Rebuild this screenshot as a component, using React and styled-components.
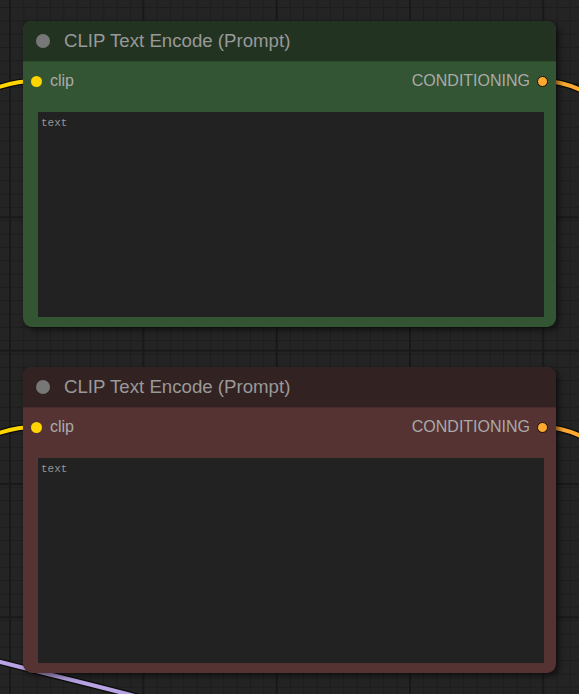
import React from "react";
import styled, { createGlobalStyle } from "styled-components";

const Global = createGlobalStyle`
  html, body { margin: 0; padding: 0; background: #232323; }
  body { font-family: "Liberation Sans", Arial, sans-serif; }
`;

const Canvas = styled.div`
  position: relative;
  width: 579px;
  height: 694px;
  overflow: hidden;
  background-color: #242424;
  background-image:
    linear-gradient(to right, #191919 0, #191919 2px, transparent 2px),
    linear-gradient(to bottom, #191919 0, #191919 2px, transparent 2px),
    linear-gradient(to right, #1d1d1d 0, #1d1d1d 1px, transparent 1px),
    linear-gradient(to bottom, #1d1d1d 0, #1d1d1d 1px, transparent 1px);
  background-size: 133.333px 133.333px, 133.333px 133.333px, 13.333px 13.333px, 13.333px 13.333px;
  background-position: 9px 0, 0 83px, 10px 0, 0 7px;
  display: flex;
  flex-direction: column;
  gap: 40px;
  padding: 21px 0 0 23px;
  box-sizing: border-box;
`;

const Wires = styled.svg`
  position: absolute;
  inset: 0;
  width: 579px;
  height: 694px;
  z-index: 0;
`;

const Node = styled.div`
  position: relative;
  z-index: 1;
  width: 533px;
  height: 306px;
  border-radius: 9px;
  background: ${(p) => p.$body};
  box-shadow: 3px 3px 6px rgba(0, 0, 0, 0.55);
  display: flex;
  flex-direction: column;
`;

const Title = styled.div`
  height: 40px;
  flex: none;
  display: flex;
  align-items: center;
  background: ${(p) => p.$title};
  border-radius: 9px 9px 0 0;
  box-shadow: 0 1px 0 rgba(0, 0, 0, 0.12);
  padding-left: 13px;
  gap: 14px;
`;

const TitleDot = styled.span`
  width: 14px;
  height: 14px;
  border-radius: 50%;
  background: #777;
`;

const TitleText = styled.span`
  font-size: 18.67px;
  color: #999;
  line-height: 1;
`;

const SlotRow = styled.div`
  height: 40px;
  flex: none;
  display: flex;
  align-items: center;
  justify-content: space-between;
  padding: 0 8px 0 8px;
`;

const Slot = styled.div`
  display: flex;
  align-items: center;
  gap: ${(p) => (p.$out ? "7px" : "8px")};
  font-size: 16px;
  color: #aaa;
  line-height: 1;
`;

const SlotDot = styled.span`
  box-sizing: border-box;
  width: 11px;
  height: 11px;
  border-radius: 50%;
  background: ${(p) => p.$color};
  border: ${(p) => (p.$outline ? "1px solid #111" : "none")};
`;

const TextArea = styled.div`
  margin: 11px 12px 10px 15px;
  flex: 1;
  background: #222;
  font-family: "Liberation Mono", "DejaVu Sans Mono", monospace;
  font-size: 11px;
  color: #959595;
  padding: 5px 3px;
  box-sizing: border-box;
`;

function Wire({ d, color }) {
  return (
    <g fill="none" strokeLinecap="round">
      <path d={d} stroke="#0b0b0b" strokeWidth="6.5" />
      <path d={d} stroke={color} strokeWidth="4" />
    </g>
  );
}

function ClipNode({ title, body }) {
  return (
    <Node $body={body}>
      <Title $title={title}>
        <TitleDot />
        <TitleText>CLIP Text Encode (Prompt)</TitleText>
      </Title>
      <SlotRow>
        <Slot>
          <SlotDot $color="#FFD500" />
          clip
        </Slot>
        <Slot $out>
          CONDITIONING
          <SlotDot $color="#FFA931" $outline />
        </Slot>
      </SlotRow>
      <TextArea>text</TextArea>
    </Node>
  );
}

export default function App() {
  return (
    <>
      <Global />
      <Canvas>
        <Wires viewBox="0 0 579 694">
          <Wire d="M -90 118 C -35 112, -15 81, 36 81" color="#FFD500" />
          <Wire d="M 543 81 C 568 81, 585 90, 640 125" color="#FFA931" />
          <Wire d="M -90 464 C -35 458, -15 427, 36 427" color="#FFD500" />
          <Wire d="M 543 427 C 568 427, 585 436, 640 471" color="#FFA931" />
          <Wire d="M -30 654 C 30 670, 90 684, 150 700" color="#B8A3E3" />
        </Wires>
        <ClipNode title="#223322" body="#335533" />
        <ClipNode title="#332222" body="#553333" />
      </Canvas>
    </>
  );
}
